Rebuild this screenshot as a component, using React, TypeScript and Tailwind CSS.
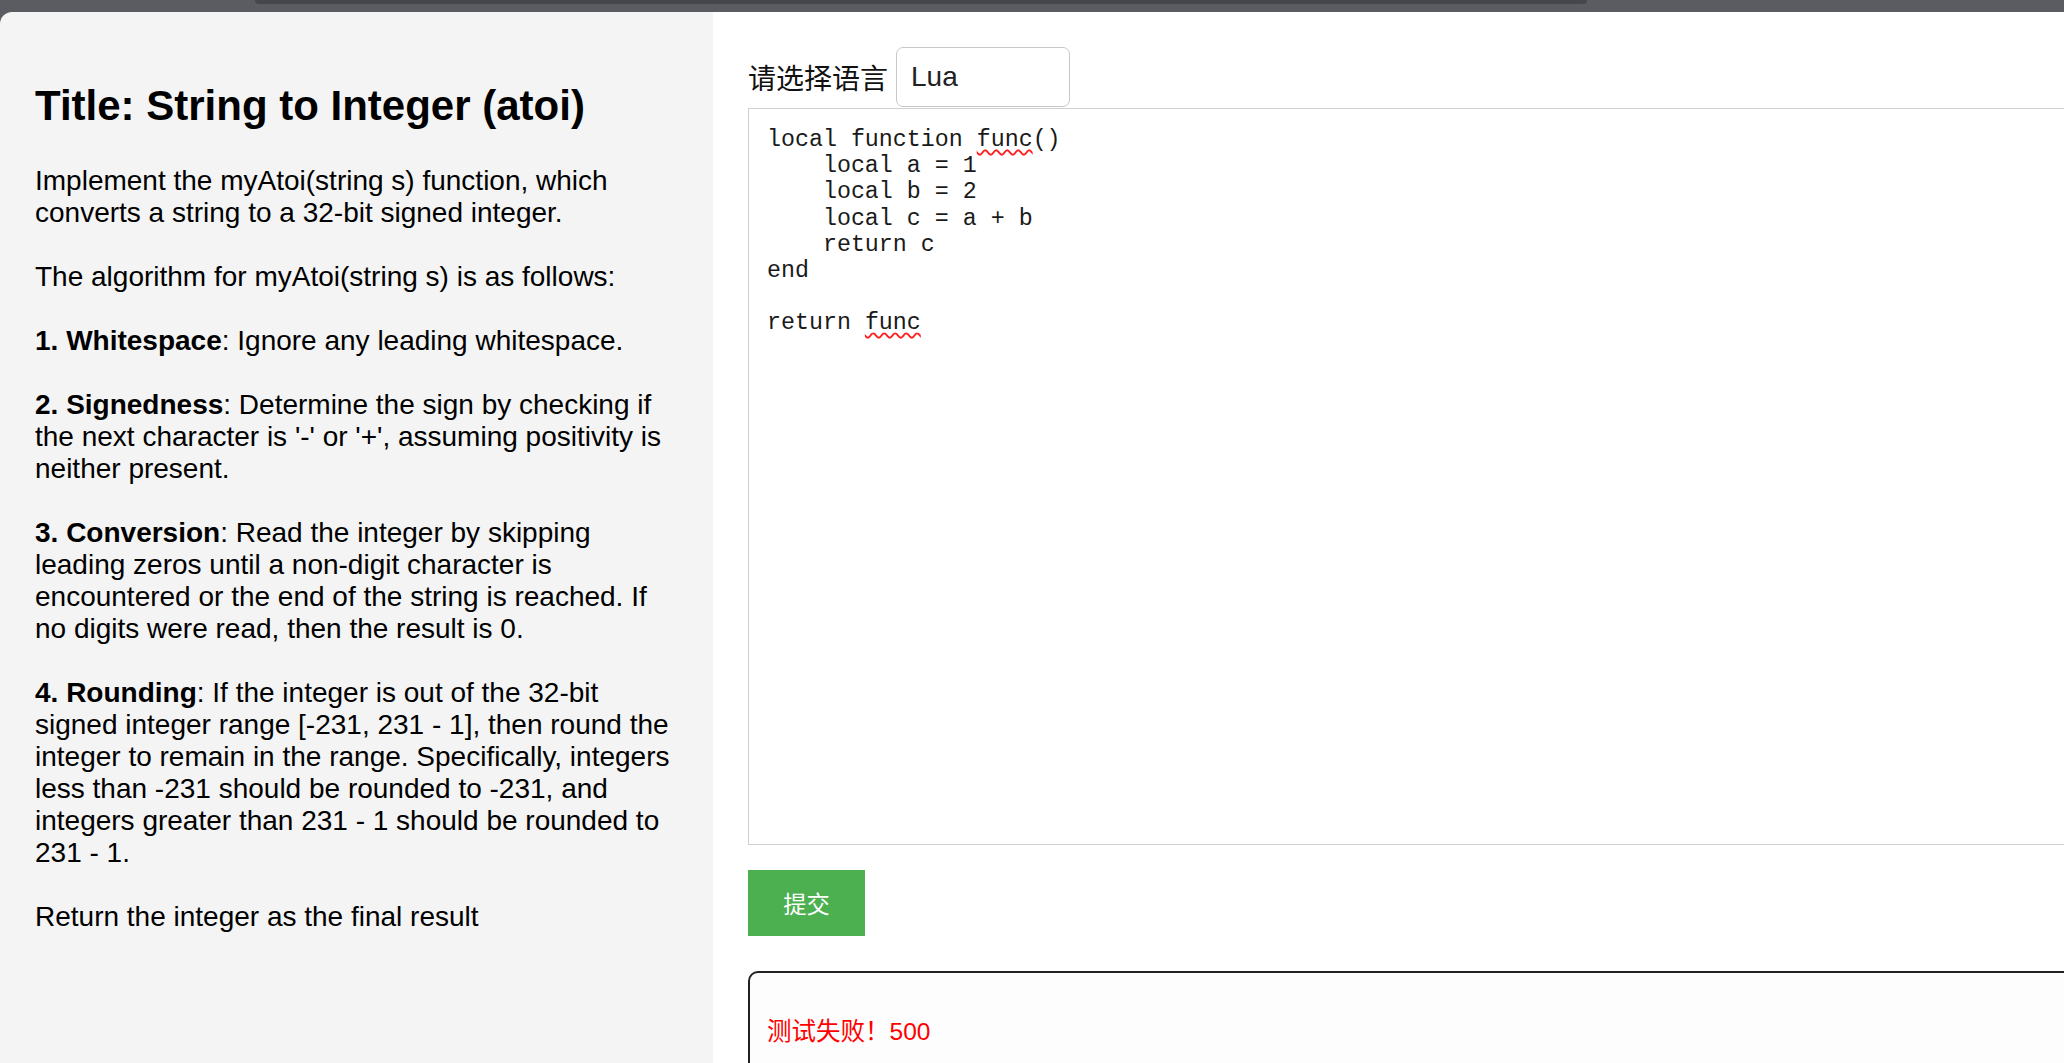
import React from "react";

const sans = { fontFamily: '"Liberation Sans", Arial, "Noto Sans CJK SC", sans-serif' };

export default function App() {
  const squiggle = "underline decoration-wavy decoration-[#ff2020] decoration-[1.5px] underline-offset-[3px]";
  return (
    <div className="w-[2064px] h-[1063px] overflow-hidden bg-[#5b5c61] flex flex-col" style={sans}>
      <div className="h-[12px] shrink-0 pl-[255px]">
        <div className="w-[1332px] h-[4px] bg-[#46474b] rounded-b-[10px]" />
      </div>
      <div className="flex flex-1 min-h-0 rounded-tl-[12px] overflow-hidden">
        <div className="w-[713px] shrink-0 bg-[#f4f4f4] px-[35px] pt-[35px] text-black">
          <h2 className="text-[42px] font-bold leading-[48.3px] mt-[35px] mb-[35px]">Title: String to Integer (atoi)</h2>
          <p className="text-[28px] leading-[32px] w-[643px]">
            Implement the myAtoi(string s) function, which converts a string to a 32-bit signed integer.
            <br />
            <br />
            The algorithm for myAtoi(string s) is as follows:
            <br />
            <br />
            <b>1. Whitespace</b>: Ignore any leading whitespace.
            <br />
            <br />
            <b>2. Signedness</b>: Determine the sign by checking if the next character is '-' or '+', assuming positivity is neither present.
            <br />
            <br />
            <b>3. Conversion</b>: Read the integer by skipping leading zeros until a non-digit character is encountered or the end of the string is reached. If no digits were read, then the result is 0.
            <br />
            <br />
            <b>4. Rounding</b>: If the integer is out of the 32-bit signed integer range [-231, 231 - 1], then round the integer to remain in the range. Specifically, integers less than -231 should be rounded to -231, and integers greater than 231 - 1 should be rounded to 231 - 1.
            <br />
            <br />
            Return the integer as the final result
          </p>
        </div>
        <div className="flex-1 min-w-0 bg-white pt-[35px] pl-[35px] flex flex-col items-start">
          <div className="flex items-center h-[60px] shrink-0">
            <span className="text-[28px] text-[#111] mr-[8px]" style={{ fontFamily: '"Noto Sans CJK SC", sans-serif' }}>请选择语言</span>
            <div className="w-[174px] h-[60px] border border-[#c8c8c8] rounded-[7px] bg-white flex items-center px-[14px] text-[28px] text-[#222]">Lua</div>
          </div>
          <div
            className="mt-[1px] w-[1400px] h-[737px] shrink-0 border-[1.5px] border-[#cfcfcf] bg-white pl-[18px] pt-[18px] text-[23.3px] leading-[26.2px] text-[#1a1a1a] whitespace-pre"
            style={{ fontFamily: '"Liberation Mono", "Courier New", monospace' }}
          >
            <div>local function <span className={squiggle}>func</span>()</div>
            <div>    local a = 1</div>
            <div>    local b = 2</div>
            <div>    local c = a + b</div>
            <div>    return c</div>
            <div>end</div>
            <div> </div>
            <div>return <span className={squiggle}>func</span></div>
          </div>
          <button className="mt-[25px] w-[117px] h-[66px] shrink-0 bg-[#4caf50] text-white text-[23.3px]" style={{ fontFamily: '"Noto Sans CJK SC", sans-serif' }}>提交</button>
          <div className="mt-[35px] w-[1400px] h-[200px] shrink-0 border-2 border-[#222] rounded-tl-[10px] bg-[#fdfdfd] px-[17px] pt-[45px]">
            <p className="text-[24.5px] leading-[28px] text-[#ff0000]" style={{ fontFamily: '"Liberation Sans", Arial, "Noto Sans CJK SC", sans-serif' }}>测试失败！500</p>
          </div>
        </div>
      </div>
    </div>
  );
}
